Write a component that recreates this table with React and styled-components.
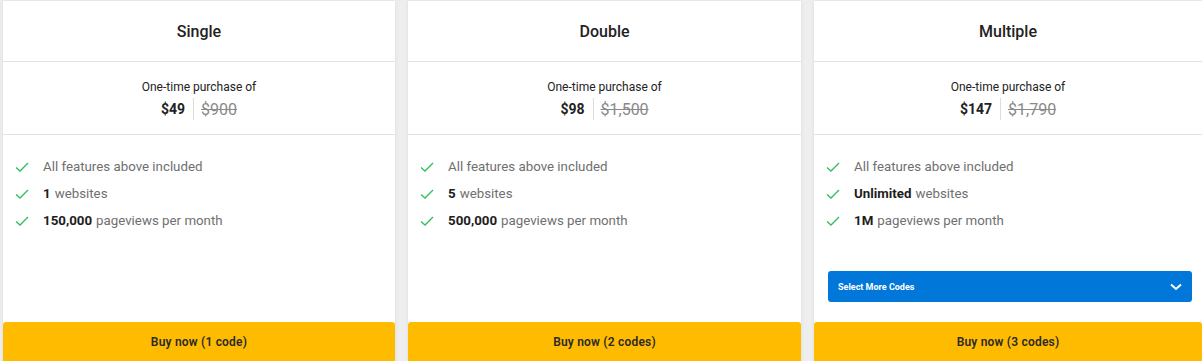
import React from "react";
import styled, { createGlobalStyle } from "styled-components";

const GlobalStyle = createGlobalStyle`
  html, body {
    margin: 0;
    padding: 0;
    background: #eeeeee;
    font-family: Roboto, "Liberation Sans", Arial, sans-serif;
    overflow: hidden;
  }
`;

const PlansBlock = styled.div`
  display: grid;
  grid-template-columns: 392px 393px 388px;
  column-gap: 13px;
  padding: 1px 0 0 3px;
  width: 1202px;
  box-sizing: border-box;
`;

const Card = styled.div`
  display: flex;
  flex-direction: column;
  height: 362px;
  background: #ffffff;
  box-shadow: 0 0 4px rgba(0, 0, 0, 0.08);
`;

const CardHeader = styled.div`
  height: 60px;
  display: flex;
  align-items: center;
  justify-content: center;
  border-bottom: 1px solid #e3e3e3;
  font-size: 16px;
  font-weight: 500;
  color: #222;
`;

const PriceBlock = styled.div`
  height: 73px;
  border-bottom: 1px solid #e3e3e3;
  display: flex;
  flex-direction: column;
  align-items: center;
  padding-top: 18px;
  box-sizing: border-box;
`;

const PriceCaption = styled.div`
  font-size: 12px;
  color: #222;
  line-height: 15px;
`;

const PriceRow = styled.div`
  display: flex;
  align-items: center;
  margin-top: 4px;
  height: 20px;
`;

const Price = styled.span`
  font-size: 14px;
  font-weight: 700;
  color: #222;
`;

const PriceDivider = styled.span`
  width: 1px;
  height: 22px;
  background: #dddddd;
  margin: 0 7px 0 8px;
`;

const OldPrice = styled.span`
  font-size: 16px;
  color: #8a8a8a;
  text-decoration: line-through;
`;

const Features = styled.div`
  flex: 1;
  display: flex;
  flex-direction: column;
  padding: 18px 10px 0 12px;
`;

const FeatureList = styled.ul`
  list-style: none;
  margin: 0;
  padding: 0;
`;

const FeatureItem = styled.li`
  display: flex;
  align-items: center;
  height: 27px;
  font-size: 13.3px;
  color: #6f6f6f;
  b {
    color: #1d1d1d;
    font-weight: 700;
    margin-right: 4px;
  }
`;

const Check = styled.svg`
  width: 14px;
  height: 14px;
  margin-right: 14px;
  flex-shrink: 0;
`;

const CodesSelect = styled.div`
  margin: auto 0 20px 2px;
  height: 31px;
  border-radius: 3px;
  background: #0077d9;
  color: #ffffff;
  display: flex;
  align-items: center;
  justify-content: space-between;
  padding: 0 10px;
  font-size: 9px;
  font-weight: 700;
`;

const BuyButton = styled.button`
  height: 41px;
  border: 0;
  border-radius: 3px 3px 0 0;
  background: #ffbb00;
  color: #2a2a2a;
  font-family: Roboto, "Liberation Sans", Arial, sans-serif;
  font-size: 12px;
  font-weight: 600;
  letter-spacing: 0.2px;
  padding-bottom: 2px;
  cursor: pointer;
`;

const plans = [
  { name: "Single", price: "$49", old: "$900", sites: "1", views: "150,000", codes: "1 code" },
  { name: "Double", price: "$98", old: "$1,500", sites: "5", views: "500,000", codes: "2 codes" },
  { name: "Multiple", price: "$147", old: "$1,790", sites: "Unlimited", views: "1M", codes: "3 codes", select: true },
];

function CheckIcon() {
  return (
    <Check viewBox="0 0 14 14" fill="none">
      <path d="M1 7.5 L5 11 L13 3" stroke="#2fbf5a" strokeWidth="1.3" />
    </Check>
  );
}

function PlanCard({ plan }) {
  return (
    <Card>
      <CardHeader>{plan.name}</CardHeader>
      <PriceBlock>
        <PriceCaption>One-time purchase of</PriceCaption>
        <PriceRow>
          <Price>{plan.price}</Price>
          <PriceDivider />
          <OldPrice>{plan.old}</OldPrice>
        </PriceRow>
      </PriceBlock>
      <Features>
        <FeatureList>
          <FeatureItem>
            <CheckIcon />
            All features above included
          </FeatureItem>
          <FeatureItem>
            <CheckIcon />
            <b>{plan.sites}</b>websites
          </FeatureItem>
          <FeatureItem>
            <CheckIcon />
            <b>{plan.views}</b>pageviews per month
          </FeatureItem>
        </FeatureList>
        {plan.select && (
          <CodesSelect>
            Select More Codes
            <svg width="12" height="8" viewBox="0 0 12 8" fill="none">
              <path d="M1 1.5 L6 6 L11 1.5" stroke="#fff" strokeWidth="2" />
            </svg>
          </CodesSelect>
        )}
      </Features>
      <BuyButton>Buy now ({plan.codes})</BuyButton>
    </Card>
  );
}

export default function App() {
  return (
    <>
      <GlobalStyle />
      <PlansBlock>
        {plans.map((plan, i) => (
          <PlanCard key={i} plan={plan} />
        ))}
      </PlansBlock>
    </>
  );
}
